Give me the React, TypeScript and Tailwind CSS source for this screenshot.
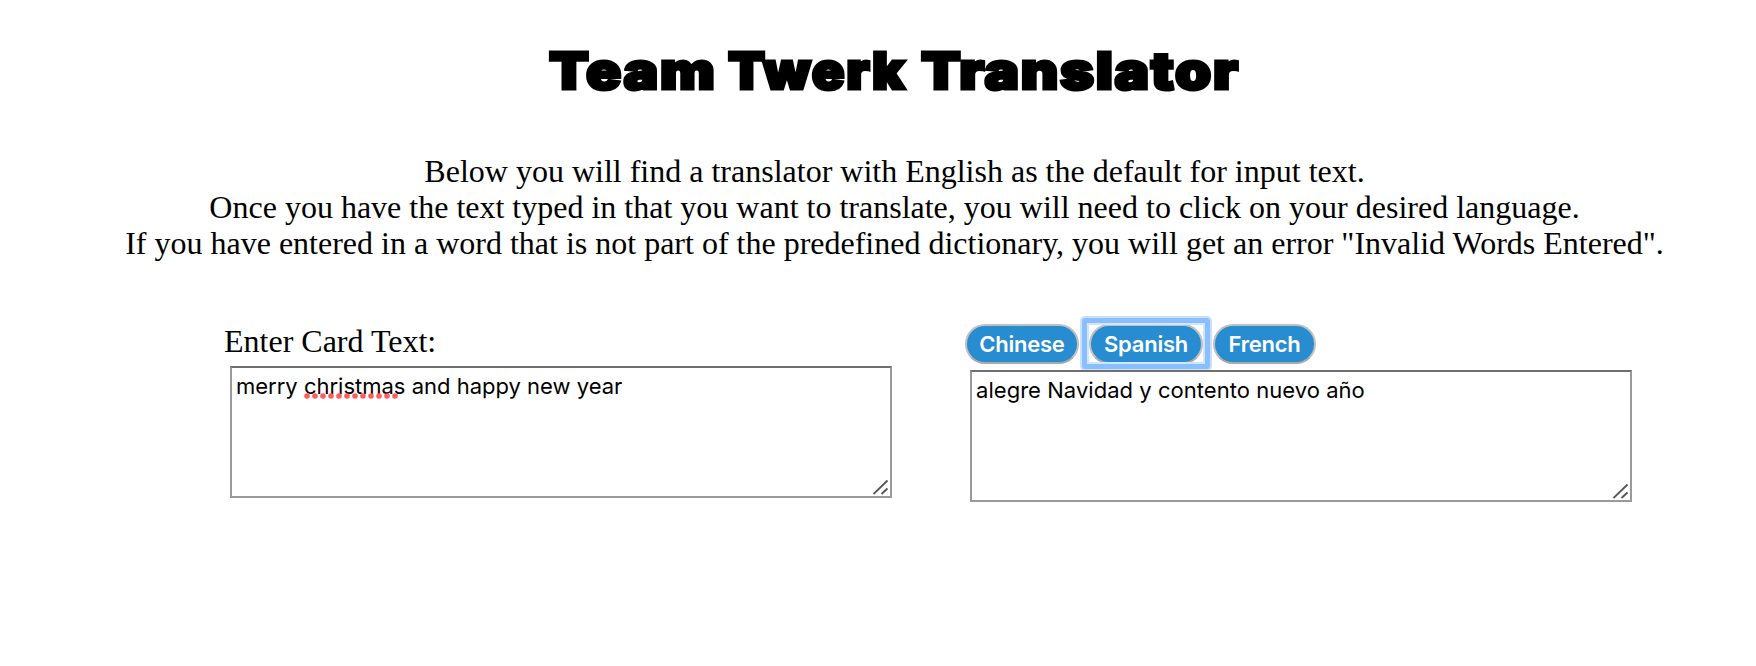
import type { ReactNode } from "react";

function Grip() {
  return (
    <svg className="absolute right-[1px] bottom-[1px]" width="16" height="16" viewBox="0 0 16 16" fill="none" stroke="#555" strokeWidth="1.8">
      <path d="M0.5 15 L14.5 1.5 M8.5 15 L14.5 9.5" />
    </svg>
  );
}

function TextBox({ children }: { children: ReactNode }) {
  return (
    <div className="relative h-[132px] w-[662px] border-2 border-[#999] border-t-[#707070] bg-white px-1 pt-1 font-['Inter',sans-serif] text-[22px] leading-[28px] whitespace-nowrap">
      {children}
      <Grip />
    </div>
  );
}

function LanguageButton({ label, width, focused = false }: { label: string; width: string; focused?: boolean }) {
  return (
    <button
      className={`relative h-10 rounded-full border-2 border-[#c0c0c0] border-b-[#aaa] bg-[#288cd0] font-['Inter',sans-serif] text-[22px] leading-[36px] font-semibold tracking-[-0.25px] text-white ${width}`}
    >
      {label}
      {focused && (
        <span className="absolute -top-[10px] -right-[11px] -bottom-[9px] -left-[11px] rounded-[5px] border-2 border-[#c9e1ff]">
          <span className="block h-full rounded-[3px] border-[5px] border-[#89bffc]">
            <span className="block h-full border-2 border-[#d0e5ff]" />
          </span>
        </span>
      )}
    </button>
  );
}

export default function App() {
  return (
    <main className="h-[666px] w-[1756px] overflow-hidden bg-white font-['Liberation_Serif',serif] text-black">
      <h1 className="flex h-[153px] justify-start pt-[39px] pl-[549px] font-['Inter',sans-serif] text-[51px] leading-[64px] font-black tracking-[1.5px] whitespace-nowrap [-webkit-text-stroke:3px_black]">
        <span className="w-[179px] origin-left scale-x-[1.14]">Team</span>
        <span className="w-[193px] origin-left scale-x-[1.06]">Twerk</span>
        <span className="origin-left scale-x-[1.135]">Translator</span>
      </h1>
      <p className="pl-[33px] text-center text-[32px] leading-[36px] whitespace-nowrap">
        Below you will find a translator with English as the default for input text.
        <br />
        Once you have the text typed in that you want to translate, you will need to click on your desired language.
        <br />
        If you have entered in a word that is not part of the predefined dictionary, you will get an error "Invalid Words Entered".
      </p>
      <div className="flex gap-[73px] pt-[63px] pl-[224px]">
        <section className="w-[668px]">
          <label className="-mt-px block h-[43px] text-[32px] leading-[36px]">Enter Card Text:</label>
          <div className="pl-[6px]">
            <TextBox>
              merry{" "}
              <span className="relative inline-block">
                christmas
                <svg className="absolute top-[21px] left-0" width="96" height="6">
                  <path d="M3 3H94" stroke="#ff5c5c" strokeWidth="5.6" strokeLinecap="round" strokeDasharray="0 8" />
                </svg>
              </span>{" "}
              and happy new year
            </TextBox>
          </div>
        </section>
        <section className="w-[668px]">
          <div className="flex h-[46px] gap-[10px]">
            <LanguageButton label="Chinese" width="w-[114px]" />
            <LanguageButton label="Spanish" width="w-[114px]" focused />
            <LanguageButton label="French" width="w-[103px]" />
          </div>
          <div className="pl-[5px]">
            <TextBox>
              <span className="tracking-[0.04px]">alegre Navidad y contento nuevo año</span>
            </TextBox>
          </div>
        </section>
      </div>
    </main>
  );
}
